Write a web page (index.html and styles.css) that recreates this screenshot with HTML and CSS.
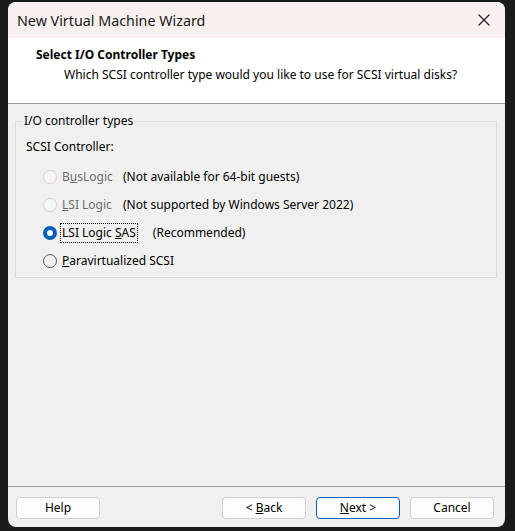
FILE: index.html
```html
<!DOCTYPE html>
<html>
<head>
<meta charset="utf-8">
<link rel="stylesheet" href="styles.css">
</head>
<body>
<div class="window">
  <div class="titlebar">
    <span class="title">New Virtual Machine Wizard</span>
    <svg class="close" width="12" height="12" viewBox="0 0 12 12"><path d="M0.5 0.5L11.5 11.5M11.5 0.5L0.5 11.5" stroke="#1a1a1a" stroke-width="1.1" fill="none"/></svg>
  </div>
  <div class="header">
    <div class="h-title">Select I/O Controller Types</div>
    <div class="h-sub">Which SCSI controller type would you like to use for SCSI virtual disks?</div>
  </div>
  <div class="body">
    <fieldset class="group">
      <legend class="legend">I/O controller types</legend>
      <div class="group-inner">
        <div class="caption">SCSI Controller:</div>
        <div class="row">
          <span class="radio disabled"></span>
          <span class="label disabled fixed">B<u>u</u>sLogic</span>
          <span class="desc">(Not available for 64-bit guests)</span>
        </div>
        <div class="row">
          <span class="radio disabled"></span>
          <span class="label disabled fixed"><u>L</u>SI Logic</span>
          <span class="desc">(Not supported by Windows Server 2022)</span>
        </div>
        <div class="row">
          <span class="radio checked"></span>
          <span class="label focus">LSI Logic <u>S</u>AS</span>
          <span class="desc rec">(Recommended)</span>
        </div>
        <div class="row">
          <span class="radio"></span>
          <span class="label"><u>P</u>aravirtualized SCSI</span>
        </div>
      </div>
    </fieldset>
  </div>
  <div class="footer">
    <button class="btn">Help</button>
    <span class="spacer"></span>
    <button class="btn">&lt; <u>B</u>ack</button>
    <button class="btn primary"><u>N</u>ext &gt;</button>
    <button class="btn">Cancel</button>
  </div>
</div>
</body>
</html>
```
FILE: styles.css
```css
html, body {
  margin: 0;
  padding: 0;
  background: #1b1b1b;
}
body {
  font-family: "Noto Sans", "Liberation Sans", sans-serif;
  font-size: 12px;
  color: #000;
}
.window {
  margin: 2px 0 0 8px;
  width: 497px;
  height: 525px;
  border-radius: 8px;
  overflow: hidden;
  background: #f0f0f0;
  display: flex;
  flex-direction: column;
}
.titlebar {
  height: 36px;
  flex: none;
  background: #f7f0ee;
  display: flex;
  align-items: center;
  justify-content: space-between;
  padding: 0 15px 0 9px;
}
.title {
  font-size: 14.3px;
  color: #1a1a1a;
}
.close {
  display: block;
}
.header {
  height: 66px;
  flex: none;
  box-sizing: border-box;
  background: #fff;
  border-bottom: 1px solid #a0a0a0;
  padding: 9px 0 0 28px;
  line-height: 16px;
}
.h-title {
  font-weight: bold;
}
.h-sub {
  margin: 4px 0 0 28px;
}
.body {
  flex: 1;
  padding: 9px 0 0 7px;
}
.group {
  margin: 0;
  padding: 0;
  width: 482px;
  box-sizing: border-box;
  border: 1px solid #dcdcdc;
  min-width: 0;
}
.legend {
  margin-left: 7px;
  padding: 0 1px;
  line-height: 16px;
}
.group-inner {
  padding: 10px 0 2px 10px;
  line-height: 16px;
}
.caption {
  margin-bottom: 8px;
}
.row {
  height: 28px;
  display: flex;
  align-items: center;
}
.radio {
  width: 14px;
  height: 14px;
  box-sizing: border-box;
  border-radius: 50%;
  border: 1px solid #5a5a5a;
  margin-left: 17px;
  margin-right: 5px;
  flex: none;
}
.radio.disabled {
  border-color: #d2d2d2;
  background: #f6f6f6;
}
.radio.checked {
  border: 4px solid #005fb8;
  background: #fff;
}
.label {
  padding: 1px 1px;
  border: 1px dotted transparent;
  margin-left: -2px;
}
.label.disabled {
  color: #6d6d6d;
}
.label.fixed {
  width: 63px;
  box-sizing: border-box;
}
.label.focus {
  border-color: #000;
}
.desc.rec {
  margin-left: 15px;
}
.footer {
  height: 41px;
  flex: none;
  box-sizing: border-box;
  border-top: 1px solid #a0a0a0;
  padding: 10px 11px 0 8px;
  display: flex;
  align-items: flex-start;
  gap: 10px;
}
.spacer {
  flex: 1;
}
.btn {
  width: 84px;
  height: 22px;
  box-sizing: border-box;
  border: 1px solid #d0d0d0;
  border-radius: 4px;
  background: #fdfdfd;
  font-family: inherit;
  font-size: 12px;
  color: #000;
  padding: 0;
  line-height: 18px;
}
.btn.primary {
  border-color: #005fb8;
}
```
